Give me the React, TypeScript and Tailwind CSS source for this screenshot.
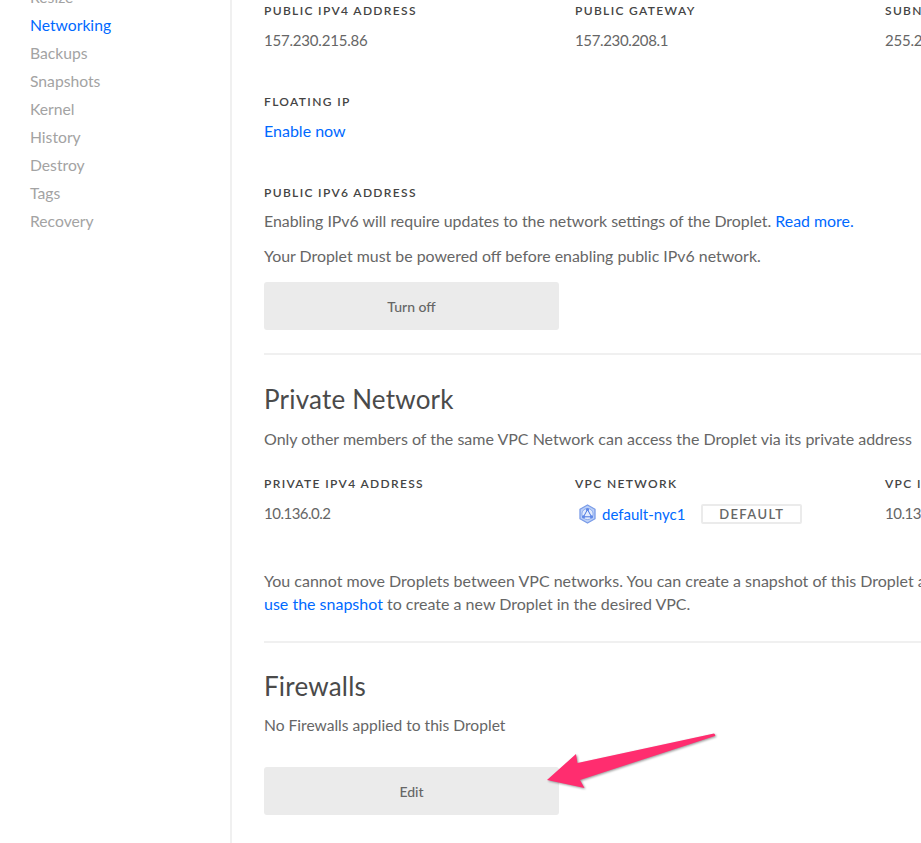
const font = { fontFamily: '"Lato", sans-serif' };

function Label({ children }: { children: React.ReactNode }) {
  return <div className="h-[20px] text-[12px] leading-[20px] font-semibold tracking-[1.35px] text-[#444] whitespace-nowrap">{children}</div>;
}

function Field({ label, width = "w-[311px]", children }: { label: string; width?: string; children: React.ReactNode }) {
  return (
    <div className={`${width} shrink-0`}>
      <Label>{label}</Label>
      <div className="mt-[8px] h-[22px] text-[15px] leading-[22px] tracking-[-0.2px] text-[#666] whitespace-nowrap">{children}</div>
    </div>
  );
}

function VpcIcon() {
  return (
    <svg width="19" height="20" viewBox="0 0 19 20" className="shrink-0">
      <path d="M9.5 1 L17 5.2 V14.8 L9.5 19 L2 14.8 V5.2 Z" fill="#bcd0f7" stroke="#7a9ce8" strokeWidth="1.3" strokeLinejoin="round" />
      <circle cx="9.5" cy="10" r="5.6" fill="#e4ecfc" stroke="#86a6ec" strokeWidth="0.9" />
      <path d="M9.5 5.5 L13.5 12.8 H5.5 Z" fill="none" stroke="#4a78e2" strokeWidth="1" />
      <circle cx="9.5" cy="5.5" r="1.6" fill="#5f88e8" />
      <circle cx="13.5" cy="12.8" r="1.6" fill="#5f88e8" />
      <circle cx="5.5" cy="12.8" r="1.6" fill="#5f88e8" />
    </svg>
  );
}

export default function App() {
  const nav = ["Resize", "Networking", "Backups", "Snapshots", "Kernel", "History", "Destroy", "Tags", "Recovery"];
  return (
    <div className="relative flex h-[843px] w-[921px] overflow-hidden bg-white" style={font}>
      <aside className="w-[232px] shrink-0 border-r-2 border-[#f0f0f0] pl-[30px]">
        <ul className="-mt-[17px]">
          {nav.map((n) => (
            <li key={n} className={`h-[28px] text-[15.7px] leading-[28px] ${n === "Networking" ? "text-[#0069ff]" : "text-[#a3a3a3]"}`}>{n}</li>
          ))}
        </ul>
      </aside>
      <main className="min-w-0 flex-1 pl-[32px]">
        <div className="flex pt-[1px]">
          <Field label="PUBLIC IPV4 ADDRESS">157.230.215.86</Field>
          <Field label="PUBLIC GATEWAY" width="w-[310px]"><span className="tracking-[-0.35px]">157.230.208.1</span></Field>
          <Field label="SUBNET MASK">255.255.240.0</Field>
        </div>
        <div className="mt-[41px]">
          <Label>FLOATING IP</Label>
          <div className="mt-[8px] h-[22px] text-[16px] leading-[22px] text-[#0069ff]">Enable now</div>
        </div>
        <div className="mt-[41px]">
          <Label>PUBLIC IPV6 ADDRESS</Label>
          <p className="mt-[7px] h-[22px] text-[15.9px] leading-[22px] text-[#666] whitespace-nowrap">
            Enabling IPv6 will require updates to the network settings of the Droplet. <span className="text-[#0069ff]">Read more.</span>
          </p>
          <p className="mt-[13px] h-[22px] text-[15.9px] leading-[22px] text-[#666] whitespace-nowrap">Your Droplet must be powered off before enabling public IPv6 network.</p>
          <button className="mt-[15px] block h-[48px] w-[295px] rounded-[3px] bg-[#ebebeb] text-[14px] font-medium text-[#666]">Turn off</button>
        </div>
        <div className="mt-[23px] border-t-2 border-[#f0f0f0] pt-[26px]">
          <h2 className="h-[36px] text-[26px] leading-[36px] tracking-[0.2px] text-[#4a4a4a]">Private Network</h2>
          <p className="mt-[11px] h-[22px] text-[16px] leading-[22px] text-[#666] whitespace-nowrap">Only other members of the same VPC Network can access the Droplet via its private address</p>
          <div className="mt-[24px] flex">
            <Field label="PRIVATE IPV4 ADDRESS"><span className="tracking-[-0.5px]">10.136.0.2</span></Field>
            <div className="w-[310px] shrink-0">
              <Label>VPC NETWORK</Label>
              <div className="mt-[9px] flex h-[22px] items-center">
                <span className="ml-[3px] mr-[5px]"><VpcIcon /></span>
                <span className="text-[15px] text-[#0069ff]">default-nyc1</span>
                <span className="ml-[16px] flex h-[20px] w-[101px] items-center justify-center rounded-[2px] border-2 border-[#ebebeb] pt-[1px] text-[13px] font-semibold tracking-[1.4px] text-[#666]">DEFAULT</span>
              </div>
            </div>
            <Field label="VPC IP RANGE"><span className="tracking-[-0.5px]">10.136.0.0/16</span></Field>
          </div>
          <p className="mt-[44px] w-[670px] text-[16px] leading-[23px] text-[#666]">
            <span className="whitespace-nowrap">You cannot move Droplets between VPC networks. You can create a snapshot of this Droplet and</span>{" "}
            <span className="text-[#0069ff]">use the snapshot</span> to create a new Droplet in the desired VPC.
          </p>
        </div>
        <div className="mt-[26px] border-t-2 border-[#f0f0f0] pt-[25px]">
          <h2 className="h-[36px] text-[26px] leading-[36px] tracking-[0.2px] text-[#4a4a4a]">Firewalls</h2>
          <p className="mt-[10px] h-[22px] text-[15.6px] leading-[22px] text-[#666]">No Firewalls applied to this Droplet</p>
          <button className="mt-[31px] block h-[48px] w-[295px] rounded-[3px] bg-[#ebebeb] text-[14px] font-medium text-[#666]">Edit</button>
        </div>
      </main>
      <svg className="absolute left-[540px] top-[728px] drop-shadow-[1px_1px_1px_rgba(0,0,0,0.4)]" width="182" height="66" viewBox="540 728 182 66">
        <path d="M547 780 L576 754 L577.5 763 L714 733.5 Q716 735 715 736 L580 780 L584.5 788 Z" fill="#ff2d6f" />
      </svg>
    </div>
  );
}
